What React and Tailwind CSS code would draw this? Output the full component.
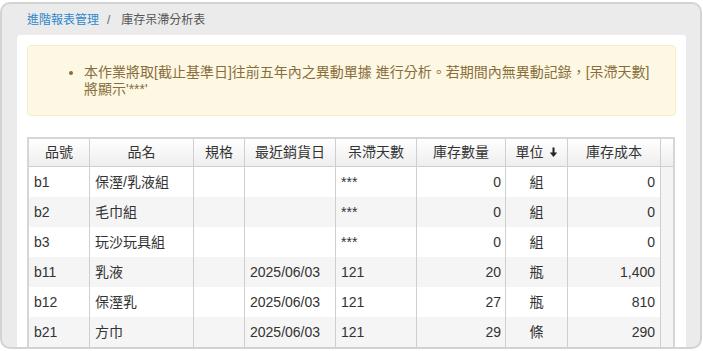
import React from "react";

const cols = [
  "w-[61px]",
  "w-[104px]",
  "w-[51px]",
  "w-[91px]",
  "w-[81px]",
  "w-[89px]",
  "w-[62px]",
  "w-[93px]",
  "w-[12px]",
];

const rows = [
  ["b1", "保溼/乳液組", "", "", "***", "0", "組", "0"],
  ["b2", "毛巾組", "", "", "***", "0", "組", "0"],
  ["b3", "玩沙玩具組", "", "", "***", "0", "組", "0"],
  ["b11", "乳液", "", "2025/06/03", "121", "20", "瓶", "1,400"],
  ["b12", "保溼乳", "", "2025/06/03", "121", "27", "瓶", "810"],
  ["b21", "方巾", "", "2025/06/03", "121", "29", "條", "290"],
];

const align = [
  "justify-start pl-[5px]",
  "justify-start pl-[5px]",
  "justify-start pl-[5px]",
  "justify-start pl-[5px]",
  "justify-start pl-[5px]",
  "justify-end pr-[4px]",
  "justify-center",
  "justify-end pr-[5px]",
  "",
];

const headers = ["品號", "品名", "規格", "最近銷貨日", "呆滯天數", "庫存數量", "單位", "庫存成本", ""];

export default function App() {
  return (
    <div
      className="w-[703px] h-[351px] overflow-hidden bg-white pt-[2px]"
      style={{ fontFamily: '"Liberation Sans", Arial, "Noto Sans CJK TC", sans-serif' }}
    >
      <div className="h-[347px] w-[702px] rounded-[10px] border-2 border-[#d3d3d3] bg-[#ebebeb] overflow-hidden pl-[15px] pr-[14px]">
        <div className="h-[31px] flex items-center pl-[10px] text-[12px] pt-[1px]">
          <span className="text-[#2f88cc]">進階報表管理</span>
          <span className="pl-[8px] pr-[11px] text-[#666]">/</span>
          <span className="text-[#555]">庫存呆滯分析表</span>
        </div>
        <div className="bg-white rounded-t-[3px] px-[10px] pt-[10px] h-[320px]">
          <div className="h-[71px] rounded-[4px] border border-[#faebcc] bg-[#fcf8e3] text-[#8a6d3b] text-[14px] leading-[17px] pt-[18px] pl-[40px] pr-[12px]">
            <ul className="list-disc pl-[16px]">
              <li>本作業將取[截止基準日]往前五年內之異動單據 進行分析。若期間內無異動記錄，[呆滯天數]將顯示'***'</li>
            </ul>
          </div>
          <div className="mt-[21px] w-[648px] border-2 border-[#d6d6d6] text-[14px] text-[#333]">
            <div className="flex h-[28px] border-b border-[#cfcfcf] bg-gradient-to-b from-white to-[#eeeeee]">
              {headers.map((h, i) => (
                <div
                  key={i}
                  className={`${cols[i]} shrink-0 flex items-center justify-center ${i < 8 ? "border-r border-[#cfcfcf]" : ""}`}
                >
                  {h}
                  {i === 6 && (
                    <svg width="9" height="11" viewBox="0 0 9 11" className="ml-[5px]">
                      <path d="M4.5 0.5 V8" stroke="#222" strokeWidth="2" />
                      <path d="M0.8 5.5 L4.5 10 L8.2 5.5 Z" fill="#222" />
                    </svg>
                  )}
                </div>
              ))}
            </div>
            {rows.map((r, ri) => (
              <div key={ri} className={`flex h-[30px] ${ri % 2 === 1 ? "bg-[#f5f5f5]" : "bg-white"}`}>
                {[...r, ""].map((c, i) => (
                  <div
                    key={i}
                    className={`${cols[i]} shrink-0 flex items-center ${align[i]} ${i < 8 ? "border-r border-[#cfcfcf]" : "bg-[#f4f4f4]"}`}
                  >
                    {c}
                  </div>
                ))}
              </div>
            ))}
          </div>
        </div>
      </div>
    </div>
  );
}
